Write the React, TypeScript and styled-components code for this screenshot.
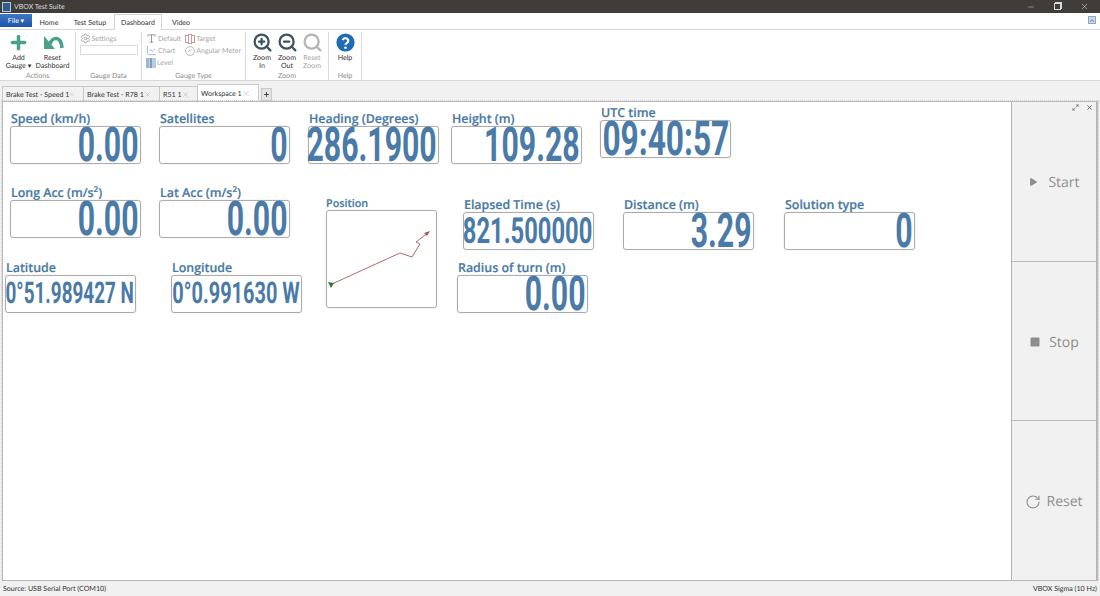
import React from "react"
import styled, { createGlobalStyle } from "styled-components"
import { Minus, X, Plus, Settings, Type, LineChart, ChevronUp, Play, Square, RotateCw, Search, ZoomIn, ZoomOut, Maximize2 } from "lucide-react"

const GlobalStyle = createGlobalStyle`
  html, body { margin: 0; padding: 0; background: #f0f0f0; }
  body { font-family: Lato, "Open Sans", sans-serif; overflow: hidden; text-rendering: geometricPrecision; }
`

const Window = styled.div`
  width: 1100px;
  height: 596px;
  display: flex;
  flex-direction: column;
  background: #f1f1f1;
  color: #333;
`

const TitleBar = styled.div`
  height: 13px;
  background: #403c39;
  display: flex;
  align-items: center;
  padding: 0 0 0 2px;
  color: #dedede;
  font-size: 7px;
  gap: 3px;
  flex: none;
`

const AppIcon = styled.div`
  width: 9px;
  height: 10px;
  background: #2c5f8e;
  border: 1px solid #b9c7d6;
  box-sizing: border-box;
`

const TitleText = styled.span`
  flex: 1;
`

const WinButtons = styled.div`
  display: flex;
  align-items: center;
  gap: 19px;
  padding-right: 11px;
  color: #d8d8d8;
`

const RestoreGlyph = styled.div`
  width: 5px;
  height: 5px;
  border: 1px solid #d8d8d8;
  box-shadow: 1px -1px 0 0 #d8d8d8;
`

const TabRow = styled.div`
  height: 16px;
  background: #fff;
  display: flex;
  align-items: flex-end;
  font-size: 7.1px;
  flex: none;
  position: relative;
`

const FileTab = styled.div`
  width: 32px;
  height: 13px;
  margin-bottom: 2px;
  background: linear-gradient(#3f76c4, #1f55a8);
  color: #fff;
  display: flex;
  align-items: center;
  justify-content: center;
  font-size: 7px;
`

const RibbonTab = styled.div<{ $active?: boolean; $w: number }>`
  width: ${(p) => p.$w}px;
  height: ${(p) => (p.$active ? "16px" : "15px")};
  box-sizing: border-box;
  display: flex;
  align-items: center;
  justify-content: center;
  background: #fff;
  color: #333;
  border: 1px solid ${(p) => (p.$active ? "#d4d4d4" : "transparent")};
  border-bottom: none;
  margin-bottom: ${(p) => (p.$active ? "-1px" : "0")};
  position: relative;
  z-index: 1;
`

const CollapseButton = styled.div`
  position: absolute;
  right: 4px;
  top: 3px;
  width: 8px;
  height: 8px;
  background: #c8d6e8;
  border: 1px solid #8fa6c4;
  box-sizing: border-box;
  display: flex;
  align-items: center;
  justify-content: center;
  color: #34567f;
`

const Ribbon = styled.div`
  height: 52px;
  flex: none;
  box-sizing: border-box;
  background: #fff;
  border-top: 1px solid #d6d6d6;
  border-bottom: 1px solid #d6d6d6;
  display: flex;
`

const Group = styled.div<{ $w: number }>`
  width: ${(p) => p.$w}px;
  flex: none;
  display: flex;
  flex-direction: column;
  align-items: center;
  margin: 2px 0 0;
  border-right: 1px solid #dcdcdc;
  box-sizing: border-box;
`

const GroupBody = styled.div<{ $gap?: number }>`
  flex: 1;
  display: flex;
  justify-content: center;
  gap: ${(p) => p.$gap ?? 4}px;
  min-height: 0;
`

const GroupLabel = styled.div`
  font-size: 7.1px;
  line-height: 9px;
  color: #8c8c8c;
`

const BigButton = styled.div<{ $off?: boolean; $w?: number }>`
  width: ${(p) => p.$w ?? 26}px;
  display: flex;
  flex-direction: column;
  align-items: center;
  font-size: 7.1px;
  line-height: 7.5px;
  text-align: center;
  color: ${(p) => (p.$off ? "#a6a6a6" : "#333")};
  white-space: nowrap;
`

const IconSlot = styled.div`
  height: 20px;
  display: flex;
  align-items: center;
  justify-content: center;
  margin-bottom: 2px;
`

const SmallColumn = styled.div`
  display: flex;
  flex-direction: column;
  gap: 1px;
  padding-top: 1px;
`

const SmallButton = styled.div`
  height: 11px;
  display: flex;
  align-items: center;
  gap: 1px;
  font-size: 7.1px;
  color: #a6a6a6;
  white-space: nowrap;
`

const GaugeDataBox = styled.div`
  width: 58px;
  height: 10px;
  border: 1px solid #dcdcdc;
  box-sizing: border-box;
`

const GaugeTypeGrid = styled.div`
  display: grid;
  grid-template-columns: auto auto;
  grid-auto-rows: 11px;
  row-gap: 1px;
  column-gap: 4px;
  padding-top: 1px;
`

const DocTabs = styled.div`
  height: 20px;
  flex: none;
  display: flex;
  align-items: flex-end;
  padding-left: 2px;
  background: #f1f1f1;
`

const DocTab = styled.div<{ $active?: boolean; $w: number }>`
  width: ${(p) => p.$w}px;
  height: ${(p) => (p.$active ? "17px" : "15px")};
  box-sizing: border-box;
  display: flex;
  align-items: center;
  justify-content: space-between;
  padding: 0 8px 0 3px;
  font-size: 7.1px;
  background: ${(p) => (p.$active ? "#fff" : "#f1f1f1")};
  border: 1px solid #c9c9c9;
  border-bottom: none;
  margin-right: -1px;
  color: #333;
  white-space: nowrap;
`

const AddTab = styled.div`
  width: 11px;
  height: 13px;
  margin-left: 3px;
  box-sizing: border-box;
  border: 1px solid #c9c9c9;
  background: #e4e4e4;
  display: flex;
  align-items: center;
  justify-content: center;
  color: #333;
`

const Body = styled.div`
  flex: 1;
  min-height: 0;
  display: flex;
  border: 1px solid #b8b8b8;
  margin: 0 2px 0 2px;
  outline: 1px dotted #cfcfcf;
`

const Canvas = styled.div`
  flex: 1;
  background: #fff;
  position: relative;
  overflow: hidden;
`

const Side = styled.div`
  width: 86px;
  box-sizing: border-box;
  flex: none;
  display: flex;
  flex-direction: column;
  background: #f1f1f1;
  border-left: 1px solid #b4b4b4;
  border-right: 1px solid #b4b4b4;
  position: relative;
`

const SideTools = styled.div`
  position: absolute;
  top: 2px;
  right: 3px;
  display: flex;
  gap: 7px;
  align-items: center;
  color: #555;
`

const SideButton = styled.div<{ $gap: number }>`
  flex: 1;
  display: flex;
  align-items: center;
  justify-content: center;
  gap: ${(p) => p.$gap}px;
  padding-top: 2px;
  font-family: "Open Sans", sans-serif;
  font-size: 14px;
  color: #8e8e8e;
  & + & {
    border-top: 1px solid #b8b8b8;
  }
`

const StatusBar = styled.div`
  height: 15px;
  flex: none;
  display: flex;
  justify-content: space-between;
  align-items: center;
  padding: 0 3px;
  font-size: 7.1px;
  color: #333;
  background: #f0f0f0;
`

const Gauge = styled.div<{ $x: number; $y: number; $w?: number }>`
  position: absolute;
  left: ${(p) => p.$x}px;
  top: ${(p) => p.$y}px;
  width: ${(p) => p.$w ?? 131}px;
`

const GaugeLabel = styled.div<{ $small?: boolean; $dx?: number }>`
  height: 15px;
  line-height: ${(p) => (p.$small ? 17 : 15)}px;
  margin-left: ${(p) => p.$dx ?? 1}px;
  font-family: "Open Sans", sans-serif;
  font-weight: 600;
  font-size: ${(p) => (p.$small ? 10.8 : 12.4)}px;
  -webkit-text-stroke: 0.2px #4a7aa3;
  color: #4a7aa3;
  white-space: nowrap;

  sup {
    font-size: 8px;
    line-height: 0;
  }
`

const ValueBox = styled.div`
  height: 38px;
  box-sizing: border-box;
  border: 1px solid #acacac;
  border-radius: 3px;
  box-shadow: 0 0 1px #bbb;
  display: flex;
  justify-content: flex-end;
  align-items: center;
  padding-right: 1px;
`

const PositionBox = styled.div`
  height: 98px;
  box-sizing: border-box;
  border: 1px solid #acacac;
  border-radius: 3px;
  box-shadow: 0 0 1px #bbb;
`

const ValueText = styled.span<{ $sx: number; $size: number }>`
  display: inline-block;
  font-family: "Roboto", "Liberation Sans", sans-serif;
  font-weight: 700;
  font-size: ${(p) => p.$size}px;
  line-height: 36px;
  color: #4a7aa8;
  white-space: nowrap;
  transform: scaleX(${(p) => p.$sx});
  transform-origin: right center;
`

type GaugeItem = {
  x: number
  y: number
  label: React.ReactNode
  value: string
  sx?: number
  size?: number
}

const gauges: GaugeItem[] = [
  { x: 7, y: 9, label: "Speed (km/h)", value: "0.00" },
  { x: 156, y: 9, label: "Satellites", value: "0" },
  { x: 305, y: 9, label: "Heading (Degrees)", value: "286.1900" },
  { x: 448, y: 9, label: "Height (m)", value: "109.28" },
  { x: 597, y: 3, label: "UTC time", value: "09:40:57", sx: 0.66 },
  { x: 7, y: 83, label: <>Long Acc (m/s<sup>2</sup>)</>, value: "0.00" },
  { x: 156, y: 83, label: <>Lat Acc (m/s<sup>2</sup>)</>, value: "0.00" },
  { x: 460, y: 95, label: "Elapsed Time (s)", value: "821.500000", size: 36, sx: 0.66 },
  { x: 620, y: 95, label: "Distance (m)", value: "3.29" },
  { x: 781, y: 95, label: "Solution type", value: "0" },
  { x: 2, y: 158, label: "Latitude", value: "0°51.989427 N", size: 30, sx: 0.63 },
  { x: 168, y: 158, label: "Longitude", value: "0°0.991630 W", size: 30, sx: 0.665 },
  { x: 454, y: 158, label: "Radius of turn (m)", value: "0.00" },
]

const UndoArrow = () => (
  <svg width="22" height="18" viewBox="0 0 22 18">
    <path d="M8 11 C10 4, 19 2, 20 15" fill="none" stroke="#4aa08a" strokeWidth="3.6" />
    <path d="M2 3 L2 16 L13 16 Z" fill="#4aa08a" />
  </svg>
)

const HelpIcon = () => (
  <svg width="19" height="19" viewBox="0 0 24 24">
    <circle cx="12" cy="12" r="11.5" fill="#1f6bb5" />
    <path d="M8.5 9 a3.6 3.6 0 0 1 7 1.2 c0 2.4 -3.5 2.8 -3.5 4.6" fill="none" stroke="#fff" strokeWidth="2.8" />
    <circle cx="12" cy="18.6" r="1.7" fill="#fff" />
  </svg>
)

const TargetIcon = () => (
  <svg width="10" height="10" viewBox="0 0 10 10" fill="none" stroke="#c99a9a">
    <rect x="0.5" y="1.5" width="3" height="7" />
    <rect x="3.5" y="0.5" width="3" height="9" />
    <rect x="6.5" y="1.5" width="3" height="7" />
  </svg>
)

const LevelIcon = () => (
  <svg width="10" height="10" viewBox="0 0 10 10">
    <rect x="0" y="0" width="3" height="10" fill="#9db6d2" />
    <rect x="3.5" y="0" width="3" height="10" fill="#7f9cc0" />
    <rect x="7" y="0" width="3" height="10" fill="#b9cbe0" />
  </svg>
)

const MeterIcon = () => (
  <svg width="10" height="10" viewBox="0 0 10 10" fill="none" stroke="#a8a8a8" strokeWidth="0.8">
    <circle cx="5" cy="5" r="4.4" />
    <path d="M3 6 L6.5 3.5" />
  </svg>
)

const App: React.FC = () => {
  return (
    <Window>
      <GlobalStyle />
      <TitleBar>
        <AppIcon />
        <TitleText>VBOX Test Suite</TitleText>
        <WinButtons>
          <Minus size={8} strokeWidth={1.5} />
          <RestoreGlyph />
          <X size={9} strokeWidth={1.5} />
        </WinButtons>
      </TitleBar>

      <TabRow>
        <FileTab>File ▾</FileTab>
        <RibbonTab $w={34}>Home</RibbonTab>
        <RibbonTab $w={48}>Test Setup</RibbonTab>
        <RibbonTab $active $w={48}>Dashboard</RibbonTab>
        <RibbonTab $w={38}>Video</RibbonTab>
        <CollapseButton>
          <ChevronUp size={7} strokeWidth={3} />
        </CollapseButton>
      </TabRow>

      <Ribbon>
        <Group $w={76}>
          <GroupBody>
            <BigButton>
              <IconSlot>
                <Plus size={21} color="#4aa08a" strokeWidth={4} />
              </IconSlot>
              Add<br />Gauge ▾
            </BigButton>
            <BigButton $w={34}>
              <IconSlot>
                <UndoArrow />
              </IconSlot>
              Reset<br />Dashboard
            </BigButton>
          </GroupBody>
          <GroupLabel>Actions</GroupLabel>
        </Group>
        <Group $w={66}>
          <GroupBody>
            <SmallColumn>
              <SmallButton>
                <Settings size={11} />
                Settings
              </SmallButton>
              <GaugeDataBox />
            </SmallColumn>
          </GroupBody>
          <GroupLabel>Gauge Data</GroupLabel>
        </Group>
        <Group $w={104}>
          <GroupBody>
            <GaugeTypeGrid>
              <SmallButton>
                <Type size={11} color="#8f8f8f" />
                Default
              </SmallButton>
              <SmallButton>
                <TargetIcon />
                Target
              </SmallButton>
              <SmallButton>
                <LineChart size={11} color="#9fb7cc" />
                Chart
              </SmallButton>
              <SmallButton>
                <MeterIcon />
                Angular Meter
              </SmallButton>
              <SmallButton>
                <LevelIcon />
                Level
              </SmallButton>
            </GaugeTypeGrid>
          </GroupBody>
          <GroupLabel>Gauge Type</GroupLabel>
        </Group>
        <Group $w={83}>
          <GroupBody $gap={0}>
            <BigButton $w={25}>
              <IconSlot>
                <ZoomIn size={21} color="#3d5360" strokeWidth={2.6} />
              </IconSlot>
              Zoom<br />In
            </BigButton>
            <BigButton $w={25}>
              <IconSlot>
                <ZoomOut size={21} color="#3d5360" strokeWidth={2.6} />
              </IconSlot>
              Zoom<br />Out
            </BigButton>
            <BigButton $off $w={25}>
              <IconSlot>
                <Search size={21} color="#b4b4b4" strokeWidth={2.6} />
              </IconSlot>
              Reset<br />Zoom
            </BigButton>
          </GroupBody>
          <GroupLabel>Zoom</GroupLabel>
        </Group>
        <Group $w={33}>
          <GroupBody>
            <BigButton>
              <IconSlot>
                <HelpIcon />
              </IconSlot>
              Help
            </BigButton>
          </GroupBody>
          <GroupLabel>Help</GroupLabel>
        </Group>
      </Ribbon>

      <DocTabs>
        <DocTab $w={82}>Brake Test - Speed 1<X size={9} color="#b5b5b5" /></DocTab>
        <DocTab $w={77}>Brake Test - R78 1<X size={9} color="#b5b5b5" /></DocTab>
        <DocTab $w={39}>R51 1<X size={9} color="#b5b5b5" /></DocTab>
        <DocTab $active $w={62}>Workspace 1<X size={9} color="#b5b5b5" /></DocTab>
        <AddTab><Plus size={7} strokeWidth={3} /></AddTab>
      </DocTabs>

      <Body>
        <Canvas>
          {gauges.map((g, i) => (
            <Gauge key={i} $x={g.x} $y={g.y}>
              <GaugeLabel>{g.label}</GaugeLabel>
              <ValueBox>
                <ValueText $sx={g.sx ?? 0.63} $size={g.size ?? 48}>{g.value}</ValueText>
              </ValueBox>
            </Gauge>
          ))}
          <Gauge $x={323} $y={93} $w={111}>
            <GaugeLabel $small $dx={0}>Position</GaugeLabel>
            <PositionBox>
              <svg width="109" height="96" viewBox="0 0 109 96">
                <path d="M5 73 L73 42 L85 46 L93 33 L89 31 L102 21" fill="none" stroke="#a8585f" strokeWidth="0.9" />
                <path d="M103 20 L97 22 L100 25 Z" fill="#a8585f" />
                <path d="M1 71 L7 72 L4 77 Z" fill="#2f7a35" />
              </svg>
            </PositionBox>
          </Gauge>
        </Canvas>
        <Side>
          <SideTools>
            <Maximize2 size={7} />
            <X size={7} strokeWidth={3} />
          </SideTools>
          <SideButton $gap={10}><Play size={10} fill="#8e8e8e" strokeWidth={0} />Start</SideButton>
          <SideButton $gap={8}><Square size={12} fill="#8e8e8e" strokeWidth={0} />Stop</SideButton>
          <SideButton $gap={5}><RotateCw size={16} strokeWidth={1.6} />Reset</SideButton>
        </Side>
      </Body>

      <StatusBar>
        <span>Source: USB Serial Port (COM10)</span>
        <span>VBOX Sigma (10 Hz)</span>
      </StatusBar>
    </Window>
  )
}

export default App
